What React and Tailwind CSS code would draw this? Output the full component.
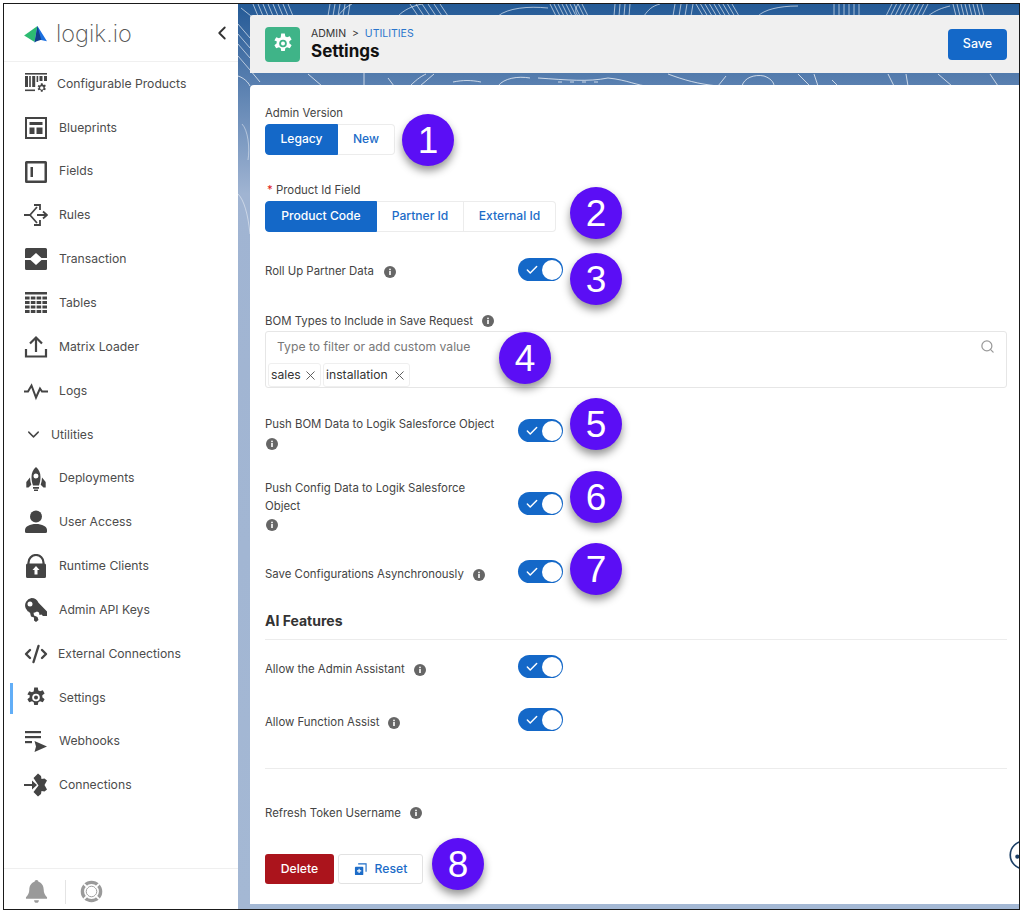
import React from "react";
import { Check, ChevronDown, ChevronLeft, CodeXml, Search, X } from "lucide-react";

// icons for the sidebar, drawn to follow the screenshot
const gearPath =
  "M10.2 1.5h3.6l.5 2.9c.6.2 1.2.5 1.7.9l2.8-1 1.8 3.1-2.3 1.9a7 7 0 0 1 0 2l2.3 1.9-1.8 3.1-2.8-1c-.5.4-1.1.7-1.7.9l-.5 2.9h-3.6l-.5-2.9c-.6-.2-1.2-.5-1.7-.9l-2.8 1-1.8-3.1 2.3-1.9a7 7 0 0 1 0-2L3.4 8.4l1.8-3.1 2.8 1c.5-.4 1.1-.7 1.7-.9z";

const ProductsIcon = () => (
  <svg viewBox="0 0 24 24" className="w-[24px] h-[24px]" fill="#444">
    <rect x="1" y="1" width="22" height="1.6" />
    <rect x="1" y="4" width="3" height="11" />
    <rect x="5.2" y="4" width="1.6" height="11" />
    <rect x="8.2" y="4" width="3" height="11" />
    <rect x="12.6" y="4" width="1.6" height="6" />
    <rect x="15.5" y="4" width="3" height="5" />
    <rect x="20" y="4" width="3" height="5" />
    <rect x="1" y="17.5" width="10" height="1.6" />
    <g transform="translate(12 10.5) scale(.48)">
      <path d={gearPath} fillRule="evenodd" />
      <circle cx="12" cy="11.5" r="3.6" fill="#fff" />
    </g>
  </svg>
);

const BlueprintIcon = () => (
  <svg viewBox="0 0 24 24" className="w-[24px] h-[24px]" fill="#444">
    <path fillRule="evenodd" d="M1 1h22v22H1zM3 3v18h18V3z" />
    <rect x="5.5" y="6" width="13" height="3" />
    <rect x="5.5" y="11.5" width="5" height="6.5" />
    <rect x="12.5" y="11.5" width="6" height="6.5" />
  </svg>
);

const FieldsIcon = () => (
  <svg viewBox="0 0 24 24" className="w-[24px] h-[24px]" fill="#444">
    <path fillRule="evenodd" d="M2.5 1h19A1.5 1.5 0 0 1 23 2.500v19a1.500 1.500 0 0 1-1.500 1.500h-19A1.500 1.500 0 0 1 1 21.500v-19A1.500 1.500 0 0 1 2.500 1zM3.500 3.500v17h17v-17z" />
    <rect x="6.500" y="7" width="2.500" height="10" />
  </svg>
);

const RulesIcon = () => (
  <svg viewBox="0 0 24 24" className="w-[24px] h-[24px]" fill="none" stroke="#444" strokeWidth="1.800">
    <path d="M0 12h6M6 12l7-8M6 12l7 8M13 12h10" />
    <path d="M10 2h6v5M10 22h6v-5M19 8.500l4 3.500-4 3.500" />
  </svg>
);

const TransactionIcon = () => (
  <svg viewBox="0 0 24 24" className="w-[24px] h-[24px]" fill="#444">
    <path fillRule="evenodd" d="M2.500 1h19A1.500 1.500 0 0 1 23 2.500v19a1.500 1.500 0 0 1-1.500 1.500h-19A1.500 1.500 0 0 1 1 21.500v-19A1.500 1.500 0 0 1 2.500 1zM1 11v2h5.500l5.500 5 5.500-5H23v-2h-5.500L12 6l-5.500 5z" />
  </svg>
);

const TablesIcon = () => (
  <svg viewBox="0 0 24 24" className="w-[24px] h-[24px]" fill="#444">
    <rect x="1" y="1" width="22" height="2.500" />
    {[5.500, 10, 14.500, 19].map((y) =>
      [1, 6.800, 12.600, 18.400].map((x) => (
        <rect key={`${x}-${y}`} x={x} y={y} width="4.600" height="3" />
      ))
    )}
  </svg>
);

const UploadIcon = () => (
  <svg viewBox="0 0 24 24" className="w-[24px] h-[24px]" fill="none" stroke="#444" strokeWidth="2.200">
    <path d="M12 17V3M6 8.500 12 2.500l6 6" />
    <path d="M2 14v7.500h20V14" />
  </svg>
);

const LogsIcon = () => (
  <svg viewBox="0 0 24 24" className="w-[24px] h-[24px]" fill="none" stroke="#444" strokeWidth="2">
    <path d="M0 12.500h4l3.500-6 4.500 12 4-9 2 3h6" />
  </svg>
);

const RocketIcon = () => (
  <svg viewBox="0 0 24 24" className="w-[24px] h-[24px]" fill="#444">
    <path fillRule="evenodd" d="M12 0c3 2.500 4.500 6 4.500 10 0 3-.6 6-1.500 8.500H9C8.100 16 7.500 13 7.500 10 7.500 6 9 2.500 12 0zm0 6.500a2.500 2.500 0 1 0 0 5 2.500 2.500 0 0 0 0-5z" />
    <path d="M6 10.500c.1 2.500.5 5 1.300 7.300L4.500 20.500H2.300v-5.500zM18 10.500c-.1 2.500-.5 5-1.300 7.300l2.800 2.700h2.200v-5.500zM9 20h6v1.800H9zM10 22.500h4V24h-4z" />
  </svg>
);

const UserIcon = () => (
  <svg viewBox="0 0 24 24" className="w-[24px] h-[24px]" fill="#444">
    <circle cx="12" cy="6.500" r="6" />
    <path d="M1 20c0-3.500 5-6 11-6s11 2.500 11 6v1.500a1.500 1.500 0 0 1-1.500 1.500h-19A1.500 1.500 0 0 1 1 21.500z" />
  </svg>
);

const LockIcon = () => (
  <svg viewBox="0 0 24 24" className="w-[24px] h-[24px]" fill="#444">
    <path fill="none" stroke="#444" strokeWidth="2.200" d="M4.500 10V8.500a7.500 7.500 0 0 1 15 0V10" />
    <path fillRule="evenodd" d="M3.500 9.500h17a1.500 1.500 0 0 1 1.500 1.500v11.500a1.500 1.500 0 0 1-1.500 1.500h-17A1.500 1.500 0 0 1 2 22.500V11a1.500 1.500 0 0 1 1.500-1.500zM12 12l-3.500 4h2v4.500h3V16h2z" />
  </svg>
);

const KeyIcon = () => (
  <svg viewBox="0 0 24 24" className="w-[24px] h-[24px]" fill="#444">
    <path fillRule="evenodd" d="M7.500 0a7.500 7.500 0 0 1 7 4.800L23 13.500V18h-4l-1.500-1.500-2 .5-.5-2.500-2-1A7.500 7.500 0 1 1 7.500 0zM6 3.500a2.500 2.500 0 1 0 0 5 2.500 2.500 0 0 0 0-5z" />
    <path d="M3 13.500l3 1 1 4 3 1v3l2 1.500 2.500-2-1-3-3.500-1.500-.5-3z" />
  </svg>
);

const SettingsIcon = () => (
  <svg viewBox="0 0 24 24" className="w-[24px] h-[24px]">
    <path d={gearPath} fill="#444" />
    <circle cx="12" cy="11.500" r="3.800" fill="#fff" />
    <circle cx="12" cy="11.500" r="2" fill="#444" />
  </svg>
);

const WebhookIcon = () => (
  <svg viewBox="0 0 24 24" className="w-[24px] h-[24px]" fill="#444">
    <rect x="1" y="1" width="16" height="2.200" />
    <rect x="1" y="6" width="16" height="2.200" />
    <rect x="1" y="11" width="7" height="2.200" />
    <path d="M10.500 11 23 16.500 10.500 22l1.500-5.500z" />
  </svg>
);

const ConnectionIcon = () => (
  <svg viewBox="0 0 24 24" className="w-[24px] h-[24px]" fill="#444">
    <path d="M0 11h8V7.500L13 12l-5 4.500V13H0z" />
    <path d="M9.500 5 14 .5l3 2.500.5 3 3-.5 2.500 2-2.500 4.500 2.500 4.500-2.500 2-3-.5-.5 3-3 2.500-4.500-4.500 5-6.500z" />
  </svg>
);

const BellIcon = () => (
  <svg viewBox="0 0 24 24" className="w-[23px] h-[23px]" fill="#9a9a9a">
    <path d="M12 0c1.300 0 2 .8 2 1.700C18 3 19.500 6.500 19.500 10c0 4 1.500 6 3.500 8v1.500H1V18c2-2 3.500-4 3.500-8 0-3.500 1.500-7 5.500-8.300C10 .8 10.700 0 12 0zM9.500 21h5c0 1.500-1 2.800-2.500 2.800S9.500 22.500 9.500 21z" />
  </svg>
);

const LifebuoyIcon = () => (
  <svg viewBox="0 0 24 24" className="w-[23px] h-[23px]" fill="none" stroke="#9a9a9a">
    <circle cx="12" cy="12" r="9.500" strokeWidth="3.500" />
    <circle cx="12" cy="12" r="5.500" strokeWidth="1" />
    <path strokeWidth="2" d="M4 4l4 4M20 4l-4 4M4 20l4-4M20 20l-4-4" stroke="#fff" />
  </svg>
);

const InfoIcon = ({ className = "" }) => (
  <svg viewBox="0 0 12 12" className={`w-[12px] h-[12px] shrink-0 ${className}`}>
    <circle cx="6" cy="6" r="6" fill="#666" />
    <rect x="5.200" y="5" width="1.600" height="4" fill="#fff" />
    <rect x="5.200" y="2.700" width="1.600" height="1.500" fill="#fff" />
  </svg>
);

const Toggle = () => (
  <div className="w-[45px] h-[23px] rounded-full bg-[#1468c8] flex items-center justify-between pl-[7px] pr-[1.500px] shrink-0">
    <Check size={14} strokeWidth={2.500} className="text-white" />
    <div className="w-[20px] h-[20px] rounded-full bg-white" />
  </div>
);

const Segmented = ({ items }) => (
  <div className="flex h-[31px] w-fit text-[12.100px] font-[450]">
    {items.map((item, i) => (
      <div
        key={item.label}
        className={`flex items-center justify-center border ${item.width} ${
          i === 0
            ? "bg-[#1468c8] border-[#1468c8] text-white rounded-l-[4px]"
            : "bg-white border-[#ececec] border-l-0 text-[#1c6cc8]"
        } ${i === items.length - 1 ? "rounded-r-[4px]" : ""}`}
      >
        {item.label}
      </div>
    ))}
  </div>
);

const Badge = ({ n, className }) => (
  <div
    className={`absolute w-[52px] h-[52px] rounded-full bg-[#5b0ef5] text-white text-[37px] leading-none flex items-center justify-center shadow-[0_5px_9px_rgba(0,0,0,0.42)] font-['Liberation_Sans',sans-serif] ${className}`}
  >
    {n}
  </div>
);

const navItems = [
  { label: "Configurable Products", icon: <ProductsIcon />, gap: "gap-[9px]" },
  { label: "Blueprints", icon: <BlueprintIcon /> },
  { label: "Fields", icon: <FieldsIcon /> },
  { label: "Rules", icon: <RulesIcon /> },
  { label: "Transaction", icon: <TransactionIcon /> },
  { label: "Tables", icon: <TablesIcon /> },
  { label: "Matrix Loader", icon: <UploadIcon /> },
  { label: "Logs", icon: <LogsIcon /> },
  { label: "Utilities", icon: <ChevronDown size={19} strokeWidth={1.800} className="text-[#444]" />, gap: "gap-[8px]" },
  { label: "Deployments", icon: <RocketIcon /> },
  { label: "User Access", icon: <UserIcon /> },
  { label: "Runtime Clients", icon: <LockIcon /> },
  { label: "Admin API Keys", icon: <KeyIcon /> },
  { label: "External Connections", icon: <CodeXml size={24} strokeWidth={2.400} className="text-[#444]" />, gap: "gap-[10px]" },
  { label: "Settings", icon: <SettingsIcon />, active: true },
  { label: "Webhooks", icon: <WebhookIcon /> },
  { label: "Connections", icon: <ConnectionIcon /> },
];

const Sidebar = () => (
  <aside className="w-[234px] shrink-0 bg-white flex flex-col">
    <div className="h-[58px] shrink-0 border-b border-[#f0f0f0] flex items-center pl-[20px] pr-[5px]">
      <svg viewBox="0 0 26 20" className="w-[25px] h-[19px] mt-[3px]">
        <path d="M0 11 14 1 11 18z" fill="#2dbb72" />
        <path d="M14 1 24 17 14 15 11 19z" fill="#1b6fe0" />
        <path d="M14 1 18 15.500 11 18z" fill="#123f8c" />
      </svg>
      <span className="ml-[7px] mt-[3px] text-[23.500px] leading-none font-extralight text-[#555]">logik.io</span>
      <ChevronLeft size={22} strokeWidth={2} className="ml-auto text-[#333]" />
    </div>
    <nav className="flex-1 min-h-0">
      {navItems.map((item) => (
        <div
          key={item.label}
          className={`h-[43.850px] flex items-center pl-[20px] text-[12.200px] text-[#4c4c4c] relative ${item.gap || "gap-[11px]"}`}
        >
          {item.active && <div className="absolute left-[6px] top-[7px] bottom-[6px] w-[3px] bg-[#62aef7]" />}
          {item.icon}
          <span>{item.label}</span>
        </div>
      ))}
    </nav>
    <div className="h-[41px] shrink-0 border-t border-[#efefef] flex items-center pl-[21px] pt-[5px]">
      <BellIcon />
      <div className="w-px h-[24px] bg-[#e4e4e4] ml-[17px] mr-[14px]" />
      <LifebuoyIcon />
    </div>
  </aside>
);

// clusters of short strokes in the strip above the header: start x, count, step, lean
const hatches = [
  [20, 8, 5, -5], [90, 5, 5, 2], [180, 6, 6, -8], [318, 9, 4, -6], [376, 4, 5, 1],
  [435, 4, 6, 2], [465, 9, 4.500, -7], [596, 6, 5, 0], [648, 9, 4.500, 6], [718, 8, 4, -3],
];

const Contours = () => (
  <svg className="absolute inset-0 w-full h-full" viewBox="0 0 781 905" fill="none" stroke="#fff" strokeOpacity=".6" strokeWidth="1">
    {hatches.map(([x, count, step, lean]) =>
      Array.from({ length: count }, (_, i) => (
        <path key={`${x}-${i}`} d={`M${x + i * step} 12l${lean} -12`} />
      ))
    )}
    <path d="M100 12c6-8 10-10 14-12M160 12c6-6 14-10 24-12M260 12c10-8 30-10 50-8M340 12c-4-6-2-8 0-12M406 12c4-6 8-10 16-12M520 12c6-6 20-10 40-10M690 12c8-6 14-8 22-10" />
    <path d="M0 20l12 14M0 30l12 14M0 40l12 14M0 52l12 14M3 4l10 8" />
    <path d="M12 66l10 12M0 72c6 2 10 6 12 10M70 70l14 12M126 68v14M150 74l6 8M172 82c8-8 12-10 16-12M196 70l-14 12M215 78c10-2 18-2 28 0M260 82c6-8 20-10 32-8M300 74c30 2 50 4 70 0 20 2 30 8 40 8M320 78h4M332 78h4M344 78h4M356 78h4M430 70c16 6 30 10 50 12M488 72l-8 10M504 82c2-8 12-12 22-10 6 2 10 6 10 10M560 70l12 12M576 70l4 12M594 76l6 6M650 70l6 12M668 70l2 12M700 70l14 12M752 70l8 12" strokeOpacity=".7" />
    <path d="M4 120c6 6 8 24 6 36M0 190c6 6 10 20 12 40" strokeOpacity=".45" />
  </svg>
);

const App = () => {
  return (
    <div className="w-[1024px] h-[912px] bg-white p-[3px] font-['Inter',sans-serif]">
      <div className="w-[1017px] h-[907px] border-[1.500px] border-[#1a1a1a] flex relative overflow-hidden">
        <Sidebar />
        <main className="flex-1 min-w-0 relative bg-gradient-to-b from-[#235a96] via-[#a0b4d2] via-[21%] to-[#a4b8d4] pl-[12px] pt-[11px] pb-[5px] flex flex-col">
          <Contours />
          <header className="relative h-[58px] shrink-0 bg-[#f0f0f0] rounded-tl-[3px] flex items-center pl-[15px] pr-[12px]">
            <div className="w-[35px] h-[35px] rounded-[4px] bg-[#3fb488] flex items-center justify-center">
              <svg viewBox="0 0 24 24" className="w-[24px] h-[24px]">
                <path d={gearPath} fill="#fff" />
                <circle cx="12" cy="11.500" r="3.800" fill="#3fb488" />
                <circle cx="12" cy="11.500" r="2" fill="#fff" />
              </svg>
            </div>
            <div className="ml-[11px]">
              <div className="text-[10.500px] leading-[14px] text-[#333]">
                ADMIN&nbsp; &gt;&nbsp; <span className="text-[#2a75cc]">UTILITIES</span>
              </div>
              <div className="text-[17px] leading-[20px] font-bold text-[#111]">Settings</div>
            </div>
            <button className="ml-auto w-[59px] h-[31px] rounded-[4px] bg-[#1468c8] text-white text-[12.500px] font-medium">Save</button>
          </header>

          <section className="relative mt-[12px] flex-1 min-h-0 bg-white rounded-tl-[4px] pl-[15px] pr-[12px] pt-[20px] text-[11.400px] text-[#444]">
            <div className="leading-[16px]">Admin Version</div>
            <div className="mt-[3px]">
              <Segmented items={[{ label: "Legacy", width: "w-[73px]" }, { label: "New", width: "w-[57px]" }]} />
            </div>

            <div className="mt-[27px] leading-[16px] pl-[2px]">
              <span className="text-[#e02020]">*</span> Product Id Field
            </div>
            <div className="mt-[3px]">
              <Segmented items={[{ label: "Product Code", width: "w-[112px]" }, { label: "Partner Id", width: "w-[87px]" }, { label: "External Id", width: "w-[92px]" }]} />
            </div>

            <div className="mt-[26px] flex items-start h-[23px]">
              <div className="w-[253px] flex items-center gap-[10px] h-[23px] mt-[2px]">
                Roll Up Partner Data <InfoIcon />
              </div>
              <Toggle />
            </div>

            <div className="mt-[32px] flex items-center gap-[9px] leading-[16px]">
              BOM Types to Include in Save Request <InfoIcon />
            </div>
            <div className="mt-[2px] h-[57px] border border-[#e6e6e6] rounded-[3px] relative">
              <div className="pl-[11px] pt-[7px] text-[12.200px] leading-[16px] text-[#777]">Type to filter or add custom value</div>
              <Search size={15} strokeWidth={2} className="absolute right-[11px] top-[7px] text-[#9a9a9a]" />
              <div className="flex gap-[2px] pl-[2px] mt-[8px] text-[12.200px] text-[#333]">
                <div className="h-[24px] w-[53px] border border-[#efefef] rounded-[3px] flex items-center pl-[2px] justify-between pr-[2px]">
                  sales <X size={15} strokeWidth={1.500} className="text-[#555]" />
                </div>
                <div className="h-[24px] w-[87px] border border-[#efefef] rounded-[3px] flex items-center pl-[2px] justify-between pr-[2px]">
                  installation <X size={15} strokeWidth={1.500} className="text-[#555]" />
                </div>
              </div>
            </div>

            <div className="mt-[27px] flex items-start">
              <div className="w-[253px]">
                <div className="leading-[18px]">Push BOM Data to Logik Salesforce Object</div>
                <InfoIcon className="mt-[5px] ml-px" />
              </div>
              <div className="mt-[4px]"><Toggle /></div>
            </div>

            <div className="mt-[29px] flex items-start">
              <div className="w-[253px]">
                <div className="leading-[18px] w-[220px]">Push Config Data to Logik Salesforce Object</div>
                <InfoIcon className="mt-[4px] ml-px" />
              </div>
              <div className="mt-[13px]"><Toggle /></div>
            </div>

            <div className="mt-[29px] flex items-center h-[23px]">
              <div className="w-[253px] flex items-center gap-[9px] mt-[6px]">
                Save Configurations Asynchronously <InfoIcon />
              </div>
              <Toggle />
            </div>

            <h2 className="mt-[28px] text-[14px] leading-[20px] font-bold text-[#333]">AI Features</h2>
            <div className="mt-[8px] border-t border-[#ececec]" />

            <div className="mt-[15px] flex items-center h-[23px]">
              <div className="w-[253px] flex items-center gap-[9px] mt-[6px]">
                Allow the Admin Assistant <InfoIcon />
              </div>
              <Toggle />
            </div>

            <div className="mt-[30px] flex items-center h-[23px]">
              <div className="w-[253px] flex items-center gap-[9px] mt-[6px]">
                Allow Function Assist <InfoIcon />
              </div>
              <Toggle />
            </div>

            <div className="mt-[37px] border-t border-[#ececec]" />

            <div className="mt-[36px] flex items-center gap-[9px] leading-[16px]">
              Refresh Token Username <InfoIcon />
            </div>

            <div className="mt-[33px] flex gap-[4px] text-[12.200px] font-medium">
              <button className="w-[69px] h-[30px] rounded-[3px] bg-[#ab141c] text-white">Delete</button>
              <button className="w-[85px] h-[30px] rounded-[3px] border border-[#e2e2e2] bg-white text-[#1c6cc8] flex items-center justify-center gap-[8px]">
                <svg viewBox="0 0 14 14" className="w-[13px] h-[13px]">
                  <path d="M4.500 1h8.500v8.500" fill="none" stroke="#1c6cc8" strokeWidth="1.200" />
                  <rect x="1" y="4" width="9" height="9" rx="1" fill="#1c6cc8" />
                  <path d="M5.500 6.200v4.600M3.200 8.500h4.600" stroke="#fff" strokeWidth="1.200" />
                </svg>
                Reset
              </button>
            </div>

            <svg viewBox="0 0 12 36" className="absolute right-0 top-[752px] w-[10px] h-[36px]" fill="none">
              <circle cx="18" cy="18" r="16.500" stroke="#1b3f66" strokeWidth="2" />
              <circle cx="10" cy="20" r="2.500" fill="#1b3f66" />
            </svg>
          </section>

          <Badge n="1" className="left-[164px] top-[110px]" />
          <Badge n="2" className="left-[332px] top-[183px]" />
          <Badge n="3" className="left-[332px] top-[249px]" />
          <Badge n="4" className="left-[261px] top-[328px]" />
          <Badge n="5" className="left-[332px] top-[394px]" />
          <Badge n="6" className="left-[332px] top-[467px]" />
          <Badge n="7" className="left-[332px] top-[539px]" />
          <Badge n="8" className="left-[194px] top-[834px]" />
        </main>
      </div>
    </div>
  );
};

export default App;
